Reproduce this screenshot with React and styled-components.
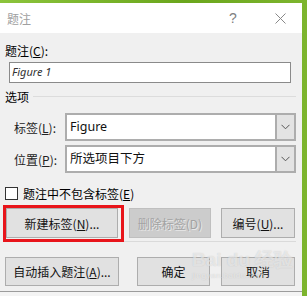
import React from "react";
import styled, { createGlobalStyle } from "styled-components";

const Global = createGlobalStyle`
  html, body { margin: 0; padding: 0; }
  body {
    width: 307px; height: 296px; overflow: hidden;
    font-family: "Noto Sans CJK SC", "Noto Sans", sans-serif;
  }
`;

const Page = styled.div`
  width: 307px;
  height: 296px;
  display: flex;
  flex-direction: column;
  background: linear-gradient(90deg, #8cc43c 0%, #6aa61c 60%, #7db52e 100%);
  padding-top: 3px;
  box-sizing: border-box;
`;

const Dialog = styled.div`
  position: relative;
  width: 302px;
  height: 289px;
  background: #f0f0f0;
  border-bottom: 1px solid #9c9c9c;
  display: flex;
  flex-direction: column;
  box-sizing: border-box;
`;

const Below = styled.div`
  width: 302px;
  flex: 1;
  background: #f4f4f4;
`;

const TitleBar = styled.div`
  height: 30px;
  background: #ffffff;
  display: flex;
  align-items: center;
  padding-left: 7px;
  color: #a0a0a0;
  font-size: 12px;
`;

const TitleText = styled.span`
  flex: 1;
`;

const TitleBtn = styled.span`
  width: ${(p) => p.$w}px;
  text-align: center;
  color: #808080;
  font-family: "Liberation Sans", sans-serif;
  font-size: 14px;
  display: flex;
  justify-content: center;
  align-items: center;
`;

const Body = styled.div`
  padding: 10px 6px 0 5px;
  display: flex;
  flex-direction: column;
  font-size: 12px;
  color: #000;
`;

const Label = styled.div`
  height: 16px;
  line-height: 16px;
  font-size: 12px;
`;

const TextInput = styled.div`
  margin: 3px 0 0 4px;
  width: 282px;
  height: 21px;
  box-sizing: border-box;
  border: 1px solid #8a8a8a;
  background: #fff;
  font-family: "Noto Sans", "Noto Sans CJK SC", sans-serif;
  font-style: italic;
  font-size: 11px;
  color: #333;
  padding-left: 2px;
  line-height: 18px;
`;

const Group = styled.div`
  margin-top: 5px;
  height: 16px;
  display: flex;
  align-items: center;
  gap: 4px;
  font-size: 12px;
`;

const GroupLine = styled.div`
  flex: 1;
  height: 1px;
  background: #dcdcdc;
`;

const FieldRow = styled.div`
  margin-top: ${(p) => p.$mt}px;
  display: flex;
  align-items: center;
  height: 28px;
`;

const FieldLabel = styled.div`
  width: 51px;
  padding-left: 9px;
  font-size: 12px;
  color: #222;
`;

const Select = styled.div`
  width: 231px;
  height: 28px;
  box-sizing: border-box;
  border: 2px solid #adadad;
  background: #fff;
  display: flex;
`;

const SelectValue = styled.div`
  flex: 1;
  font-family: "Noto Sans", "Noto Sans CJK SC", sans-serif;
  font-size: 12.5px;
  color: #111;
  padding-left: 3px;
  line-height: 23px;
`;

const SelectArrow = styled.div`
  width: 17px;
  background: #e3e3e3;
  border-left: 2px solid #adadad;
  display: flex;
  align-items: center;
  justify-content: center;
`;

const CheckRow = styled.div`
  margin-top: 14px;
  display: flex;
  align-items: center;
  gap: 5px;
  height: 13px;
  font-size: 12px;
`;

const CheckBox = styled.div`
  width: 13px;
  height: 13px;
  box-sizing: border-box;
  border: 1px solid #333;
  background: #fff;
`;

const ButtonRow = styled.div`
  margin-top: ${(p) => p.$mt}px;
  display: flex;
  height: ${(p) => p.$h}px;
`;

const Button = styled.div`
  position: relative;
  width: ${(p) => p.$w}px;
  margin-left: ${(p) => p.$ml || 0}px;
  height: 100%;
  box-sizing: border-box;
  border: 1px solid ${(p) => (p.$disabled ? "#bfbfbf" : "#adadad")};
  background: ${(p) => (p.$disabled ? "#cccccc" : "#e1e1e1")};
  color: ${(p) => (p.$disabled ? "#a3a3a3" : "#111")};
  text-shadow: ${(p) => (p.$disabled ? "1px 1px 0 #e8e8e8" : "none")};
  display: flex;
  align-items: center;
  justify-content: center;
  font-size: 12px;
`;

const Highlight = styled.div`
  position: absolute;
  left: -4px;
  right: -7px;
  top: -4px;
  bottom: -5px;
  border: 3px solid #e8151b;
  pointer-events: none;
`;

const Separator = styled.div`
  margin-top: 3px;
  height: 1px;
  background: #dadada;
`;

const U = styled.span`
  text-decoration: underline;
  text-underline-offset: 1px;
`;

const Watermark = styled.div`
  position: absolute;
  left: 192px;
  top: 246px;
  color: rgba(255, 255, 255, 0.55);
  text-shadow: 0 0 1px rgba(120, 120, 120, 0.35);
  font-family: "Liberation Sans", sans-serif;
  pointer-events: none;
  display: flex;
  flex-direction: column;
  align-items: flex-start;
`;

const WmTop = styled.div`
  font-size: 19px;
  font-weight: bold;
  line-height: 22px;
`;

const WmSmall = styled.div`
  font-size: 8px;
  line-height: 10px;
  letter-spacing: 0.5px;
`;

function Chevron() {
  return (
    <svg width="9" height="6" viewBox="0 0 9 6">
      <path d="M0.5 0.8 L4.5 4.8 L8.5 0.8" fill="none" stroke="#555" strokeWidth="1" />
    </svg>
  );
}

export default function App() {
  return (
    <>
      <Global />
      <Page>
        <Dialog>
          <TitleBar>
            <TitleText>题注</TitleText>
            <TitleBtn $w={50}>?</TitleBtn>
            <TitleBtn $w={44}>
              <svg width="11" height="11" viewBox="0 0 11 11">
                <path d="M0.5 0.5 L10.5 10.5 M10.5 0.5 L0.5 10.5" stroke="#888" strokeWidth="1" />
              </svg>
            </TitleBtn>
          </TitleBar>
          <Body>
            <Label>
              题注(<U>C</U>):
            </Label>
            <TextInput>Figure 1</TextInput>
            <Group>
              <span>选项</span>
              <GroupLine />
            </Group>
            <FieldRow $mt={9}>
              <FieldLabel>
                标签(<U>L</U>):
              </FieldLabel>
              <Select>
                <SelectValue>Figure</SelectValue>
                <SelectArrow>
                  <Chevron />
                </SelectArrow>
              </Select>
            </FieldRow>
            <FieldRow $mt={4}>
              <FieldLabel>
                位置(<U>P</U>):
              </FieldLabel>
              <Select>
                <SelectValue>所选项目下方</SelectValue>
                <SelectArrow>
                  <Chevron />
                </SelectArrow>
              </Select>
            </FieldRow>
            <CheckRow>
              <CheckBox />
              <span>
                题注中不包含标签(<U>E</U>)
              </span>
            </CheckRow>
            <ButtonRow $mt={8} $h={30}>
              <Button $w={112} $ml={1}>
                新建标签(<U>N</U>)...
                <Highlight />
              </Button>
              <Button $w={82} $ml={11} $disabled>
                删除标签(D)
              </Button>
              <Button $w={74} $ml={10}>
                编号(<U>U</U>)...
              </Button>
            </ButtonRow>
            <Separator />
            <ButtonRow $mt={15} $h={29}>
              <Button $w={114}>
                自动插入题注(<U>A</U>)...
              </Button>
              <Button $w={73} $ml={18}>
                确定
              </Button>
              <Button $w={74} $ml={11}>
                取消
              </Button>
            </ButtonRow>
          </Body>
          <Watermark>
            <WmTop>Bai du 经验</WmTop>
            <WmSmall>jingyan.baidu.com</WmSmall>
          </Watermark>
        </Dialog>
        <Below />
      </Page>
    </>
  );
}
